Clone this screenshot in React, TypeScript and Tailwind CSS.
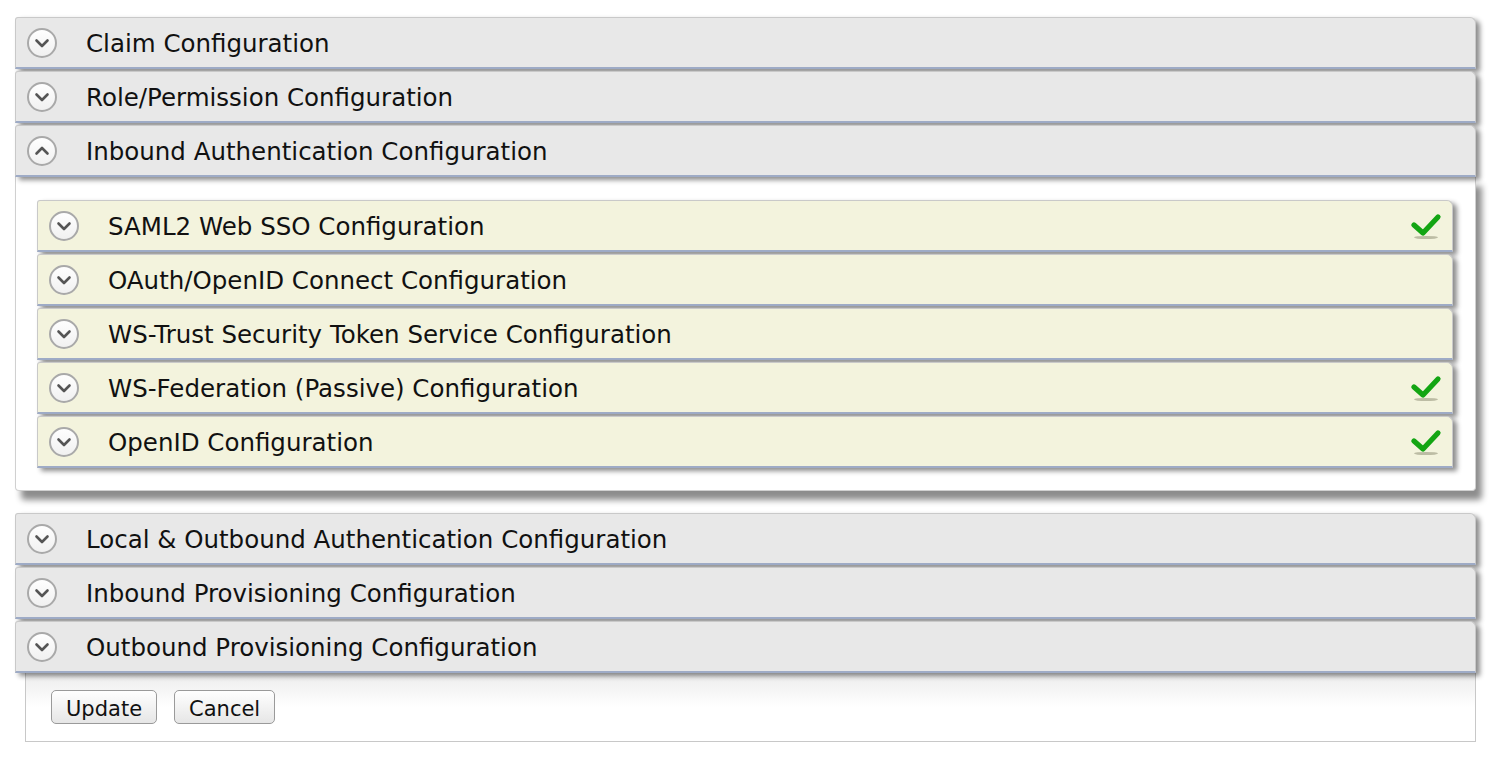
import React from "react";

const font = { fontFamily: '"DejaVu Sans", "Liberation Sans", sans-serif' };

function Toggle({ up = false }: { up?: boolean }) {
  return (
    <svg width="32" height="32" viewBox="0 0 32 32" className="shrink-0">
      <defs>
        <linearGradient id={up ? "gu" : "gd"} x1="0" y1="0" x2="0" y2="1">
          <stop offset="0" stopColor="#ffffff" />
          <stop offset="1" stopColor="#f0f0f0" />
        </linearGradient>
      </defs>
      <circle cx="16" cy="16" r="14" fill={`url(#${up ? "gu" : "gd"})`} stroke="#a9a9a9" strokeWidth="2" />
      {up ? (
        <path d="M10.5 18.5 L16 13 L21.5 18.5" fill="none" stroke="#555" strokeWidth="2.6" strokeLinecap="round" strokeLinejoin="round" />
      ) : (
        <path d="M10.5 13.5 L16 19 L21.5 13.5" fill="none" stroke="#555" strokeWidth="2.6" strokeLinecap="round" strokeLinejoin="round" />
      )}
    </svg>
  );
}

function Check() {
  return (
    <svg width="32" height="30" viewBox="0 0 32 30" className="shrink-0">
      <ellipse cx="16" cy="26.5" rx="12" ry="1.6" fill="#7a7a60" opacity="0.45" />
      <path d="M4 14 L13 22 L28 6" fill="none" stroke="#13a513" strokeWidth="5.2" strokeLinecap="round" strokeLinejoin="round" />
    </svg>
  );
}

function Header({ title, up = false }: { title: string; up?: boolean }) {
  return (
    <div className="flex h-[52px] items-center rounded-tr-[6px] rounded-tl-[3px] border border-[#c9c9c9] border-b-2 border-b-[#9eabc6] bg-[#e8e8e8] pl-[10px] shadow-[4px_3px_5px_rgba(0,0,0,0.45)]">
      <Toggle up={up} />
      <span className="ml-[28px] pt-[3px] text-[24.5px] leading-none text-[#111]" style={font}>
        {title}
      </span>
    </div>
  );
}

function SubHeader({ title, checked = false }: { title: string; checked?: boolean }) {
  return (
    <div className="flex h-[52px] items-center rounded-tr-[6px] rounded-tl-[3px] border border-[#c9c9c9] border-b-2 border-b-[#9eabc6] bg-[#f3f3dd] pl-[10px] pr-[10px] shadow-[4px_3px_5px_rgba(0,0,0,0.45)]">
      <Toggle />
      <span className="ml-[28px] flex-1 pt-[3px] text-[24.5px] leading-none text-[#111]" style={font}>
        {title}
      </span>
      {checked && <Check />}
    </div>
  );
}

export default function App() {
  return (
    <div className="min-h-[768px] w-[1492px] bg-white pt-[17px]" style={font}>
      <div className="flex w-[1461px] flex-col gap-[2px] ml-[15px]">
        <Header title="Claim Configuration" />
        <Header title="Role/Permission Configuration" />
        <Header title="Inbound Authentication Configuration" up />
      </div>
      <div className="ml-[15px] w-[1461px] rounded-b-[4px] border border-t-0 border-[#d0d0d0] bg-white pb-[22px] pl-[21px] pr-[22px] pt-[23px] shadow-[6px_9px_6px_rgba(0,0,0,0.45)]">
        <div className="flex flex-col gap-[2px]">
          <SubHeader title="SAML2 Web SSO Configuration" checked />
          <SubHeader title="OAuth/OpenID Connect Configuration" />
          <SubHeader title="WS-Trust Security Token Service Configuration" />
          <SubHeader title="WS-Federation (Passive) Configuration" checked />
          <SubHeader title="OpenID Configuration" checked />
        </div>
      </div>
      <div className="ml-[15px] mt-[22px] flex w-[1461px] flex-col gap-[2px]">
        <Header title="Local & Outbound Authentication Configuration" />
        <Header title="Inbound Provisioning Configuration" />
        <Header title="Outbound Provisioning Configuration" />
      </div>
      <div className="ml-[25px] w-[1451px] border border-t-0 border-[#c8c8c8] bg-gradient-to-b from-[#ececec] via-white to-white pb-[17px] pl-[25px] pt-[17px]">
        <div className="flex gap-[17px]">
          <button className="h-[34px] rounded-[5px] border border-[#9a9a9a] bg-gradient-to-b from-white to-[#e6e6e6] px-[14px] pt-[4px] text-[21px] leading-none text-[#111]" style={font}>
            Update
          </button>
          <button className="h-[34px] rounded-[5px] border border-[#9a9a9a] bg-gradient-to-b from-white to-[#e6e6e6] px-[14px] pt-[4px] text-[21px] leading-none text-[#111]" style={font}>
            Cancel
          </button>
        </div>
      </div>
    </div>
  );
}
